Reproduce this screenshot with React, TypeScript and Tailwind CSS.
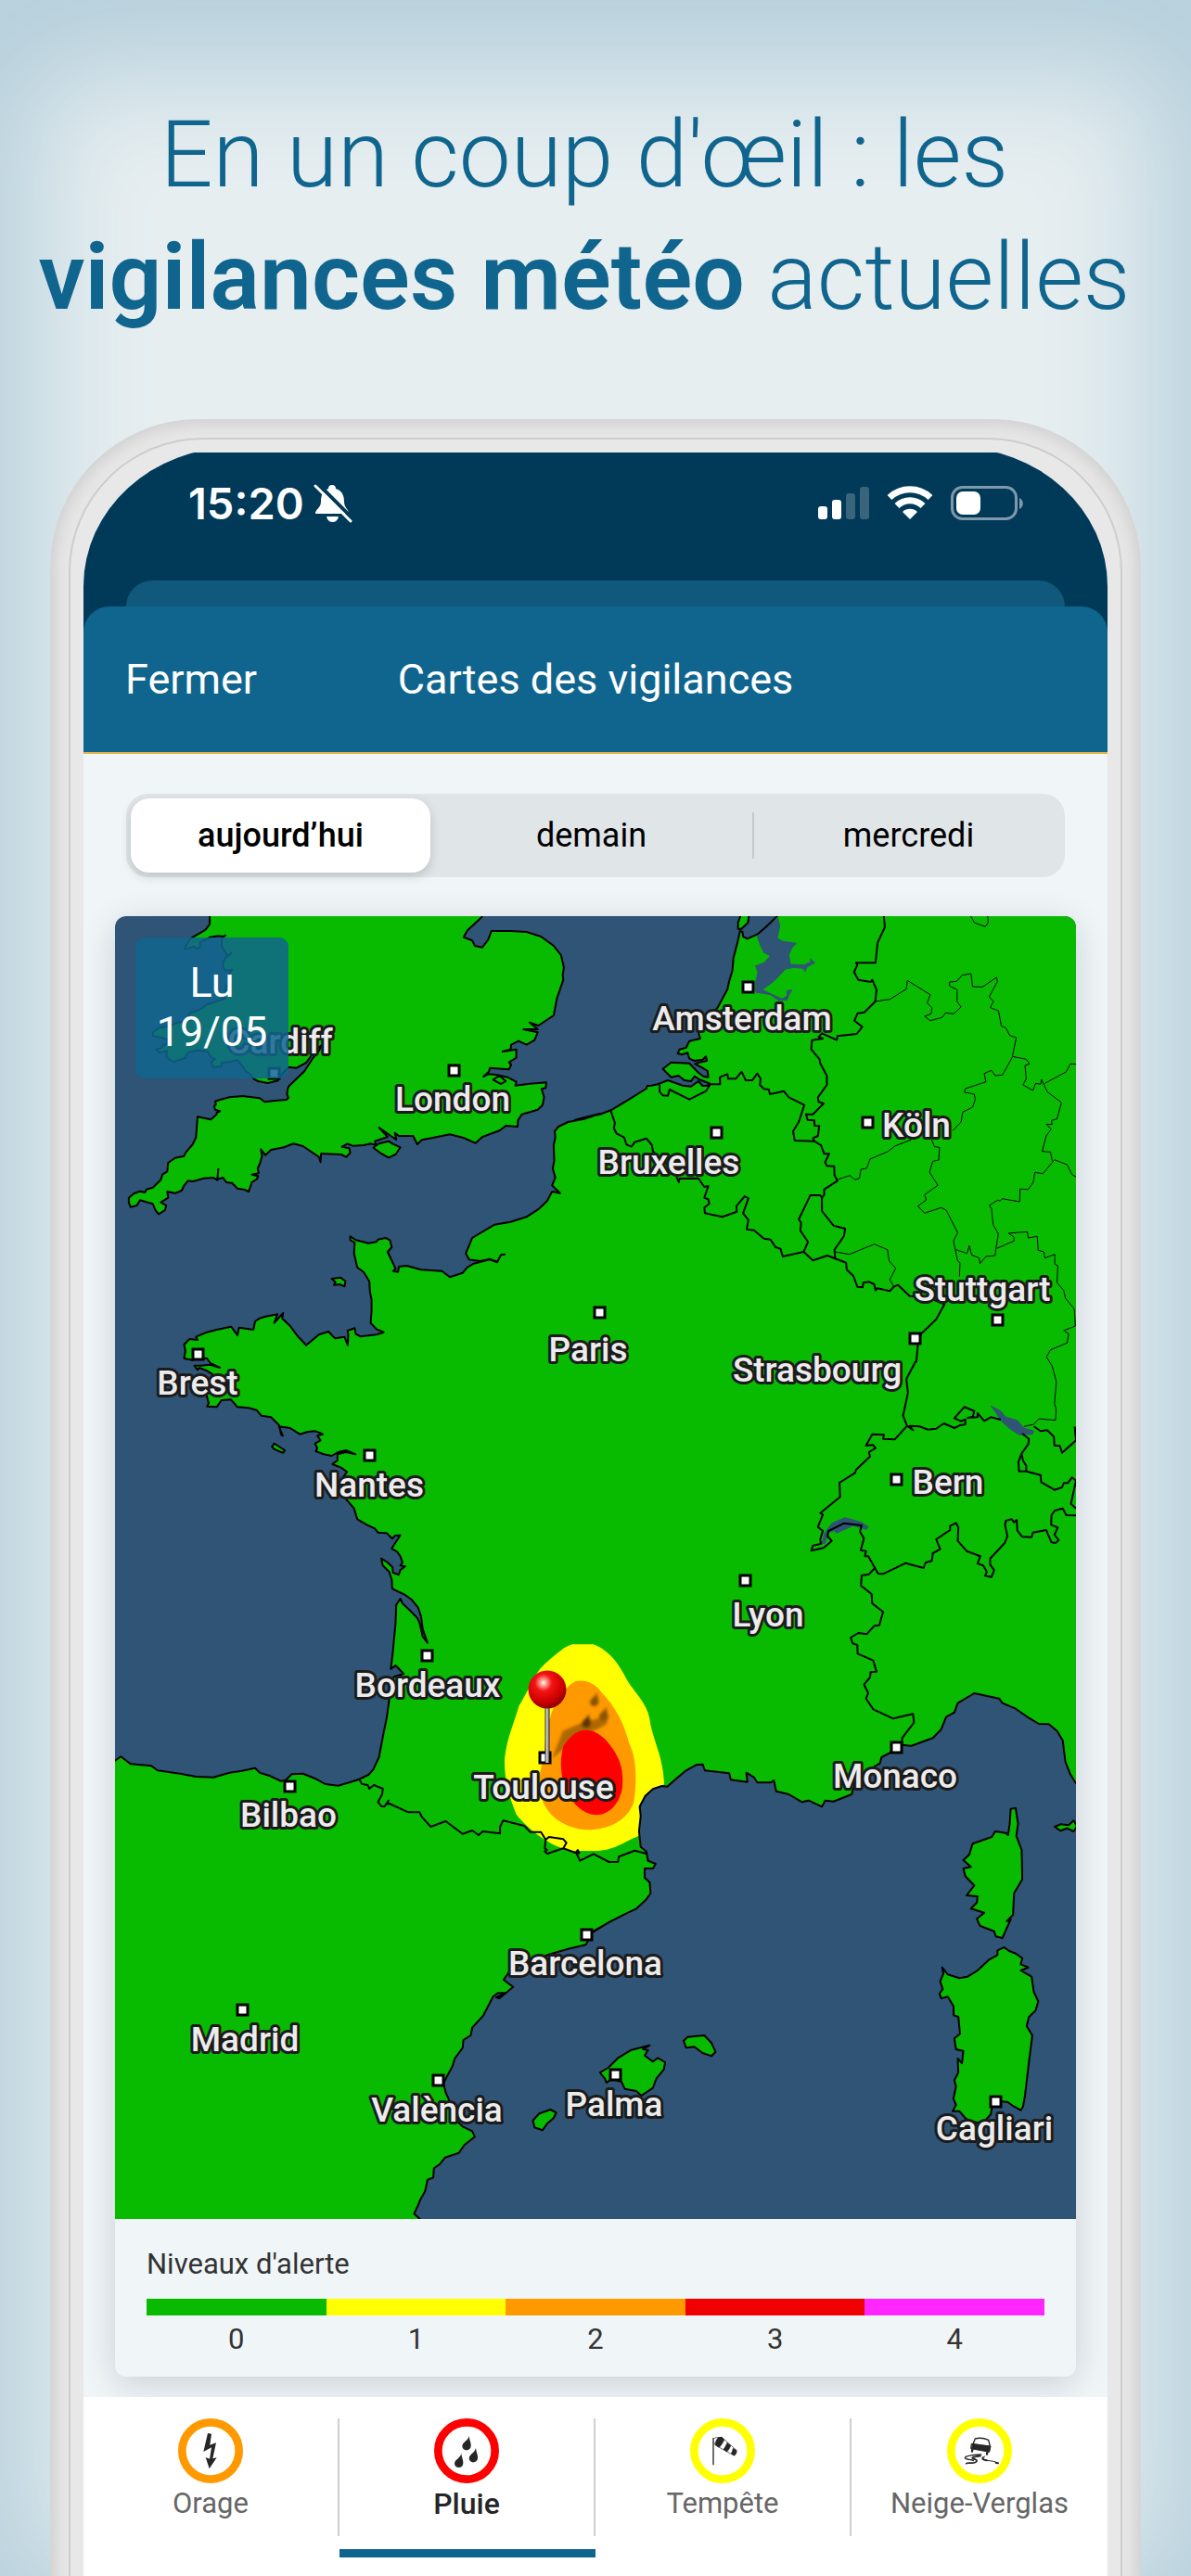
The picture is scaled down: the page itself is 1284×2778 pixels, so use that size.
import { useState } from "react";
import type { ReactNode } from "react";

type T_CITY = {
  name: string;
  // marker center
  mx: number;
  my: number;
  // label center and baseline
  x: number;
  y: number;
};

const CITIES: T_CITY[] = [
  { name: "Cardiff", mx: 171, my: 169, x: 178, y: 148 },
  { name: "London", mx: 365, my: 166, x: 364, y: 210 },
  { name: "Amsterdam", mx: 682, my: 76, x: 676, y: 123 },
  { name: "Bruxelles", mx: 648, my: 233, x: 597, y: 278 },
  { name: "Köln", mx: 811, my: 222, x: 864, y: 238 },
  { name: "Stuttgart", mx: 951, my: 435, x: 935, y: 415 },
  { name: "Strasbourg", mx: 862, my: 455, x: 757, y: 502 },
  { name: "Paris", mx: 522, my: 427, x: 510, y: 480 },
  { name: "Brest", mx: 89, my: 472, x: 89, y: 516 },
  { name: "Nantes", mx: 274, my: 581, x: 274, y: 626 },
  { name: "Bordeaux", mx: 336, my: 797, x: 337, y: 842 },
  { name: "Bern", mx: 842, my: 607, x: 898, y: 623 },
  { name: "Lyon", mx: 679, my: 716, x: 704, y: 766 },
  { name: "Toulouse", mx: 463, my: 907, x: 462, y: 952 },
  { name: "Monaco", mx: 842, my: 896, x: 841, y: 940 },
  { name: "Bilbao", mx: 188, my: 938, x: 187, y: 982 },
  { name: "Barcelona", mx: 508, my: 1098, x: 507, y: 1142 },
  { name: "Madrid", mx: 137, my: 1179, x: 140, y: 1224 },
  { name: "València", mx: 348, my: 1255, x: 347, y: 1300 },
  { name: "Palma", mx: 539, my: 1249, x: 538, y: 1294 },
  { name: "Cagliari", mx: 949, my: 1278, x: 948, y: 1320 },
];

// The outlines are stored in six sheets, each with its own origin and scale.
const sheet = (ox: number, oy: number, sx: number) => (points: string) =>
  points
    .trim()
    .split(/\s+/)
    .map((p) => {
      const [x, y] = p.split(",").map(Number);
      return `${(x / sx + ox).toFixed(1)},${(y / 3 + oy).toFixed(1)}`;
    })
    .join(" ");

const nw = sheet(-4, -8, 2.904);
const ne = sheet(496, -8, 2.8);
const w = sheet(-4, 472, 2.904);
const e = sheet(496, 472, 2.8);
const sw = sheet(-4, 892, 2.904);
const se = sheet(496, 892, 2.8);

const MAINLAND = [
  ne(`612,22 575,60 550,83 520,97 507,90 505,75 498,72 490,110 478,160 475,200 465,235 460,260 430,320 400,355 370,380
    372,400 378,420 345,428 335,450 315,455 310,468 322,472 340,466 345,485 360,492 385,488 395,478 398,492 375,497
    362,502 385,515 400,525 402,545 388,543 372,530 345,500 290,497 265,518 290,545 312,540 330,555 350,558 360,542
    375,552 405,565 400,572 385,573 372,558 350,575 325,572 280,555 250,568 230,572 218,573 215,582 150,625 108,652
    75,665 40,672 0,683`),
  nw(`1530,663 1480,680 1430,690 1400,705 1388,720 1390,740 1385,765 1387,815 1382,840 1390,870 1380,895 1405,920
    1380,915 1365,945 1340,970 1300,997 1250,1013 1200,1022 1130,1065 1120,1090 1110,1115 1120,1135 1155,1140 1185,1133
    1208,1142 1220,1120 1232,1118 1220,1120 1208,1144 1185,1135 1135,1148 1115,1160 1100,1178 1060,1192 1035,1172
    970,1168 925,1155 900,1158 898,1175 882,1172 890,1165 865,1110 878,1095 872,1072 858,1065 835,1070 830,1078
    805,1082 765,1072 748,1060 748,1072 762,1080 760,1115 770,1160 790,1175 808,1205 810,1240 815,1265 815,1300
    812,1340 830,1360 853,1370 830,1378 780,1384 765,1375 762,1357 740,1365 742,1380 740,1412 730,1385 702,1390
    695,1385 680,1368 650,1378 610,1412 590,1390 585,1385 560,1350 535,1325 538,1308 510,1340 520,1312 480,1320
    465,1325 450,1335 445,1362 400,1355 395,1380 375,1352 330,1362 300,1370 265,1385 270,1395 245,1392 228,1410
    232,1430 228,1455 255,1460 270,1452 300,1455 310,1470 340,1485 310,1475 280,1478 260,1478 270,1492`),
  w(`275,45 300,55 315,65 340,85 370,100 300,110 250,100 270,115 290,118 300,140 305,160 300,170 330,172 345,150
    375,148 395,172 430,175 455,182 470,200 500,205 525,230 532,262 537,265 525,235 560,240 590,260 615,252 640,250
    662,260 645,265 655,280 638,290 645,305 640,315 665,325 690,330 710,318 735,312 765,325 735,318 708,325 708,345
    692,357 720,368 738,382 725,400 715,440 735,470 760,500 770,535 800,553 825,565 835,578 862,580 880,598 888,588
    905,587 890,610 878,630 895,640 905,655 912,675 905,685 920,688 905,700 900,715 882,708 880,690 865,675 845,662
    850,685 870,705 878,730 880,760 920,780 940,795 960,820 970,850 975,890 990,935 975,915 965,870 958,855 935,830
    912,808 905,792 892,812 890,870 880,980 875,1020 890,1008 915,1035 885,1045 870,1070 870,1120 862,1180 850,1240
    838,1305 820,1345 805,1362 775,1377 745,1387 710,1397 670,1392 640,1375 600,1358 565,1360 545,1380 530,1382
    495,1365 465,1355 450,1340 405,1350 370,1355 320,1370 265,1368 215,1358 145,1348 125,1333 60,1327 30,1303 0,1325`),
  sw(`-20,70 -20,1580 975,1580 972,1545 948,1522 960,1495 968,1475 982,1450 990,1412 1008,1405 1010,1375 1028,1362
    1045,1340 1088,1325 1105,1300 1138,1273 1130,1255 1100,1240 1080,1220 1060,1160 1047,1130 1040,1100 1052,1075
    1068,1045 1075,1020 1100,985 1102,960 1125,945 1130,920 1165,880 1195,820 1210,808 1235,808 1215,825 1205,822
    1235,808 1258,788 1228,765 1245,740 1265,725 1330,700 1365,685 1430,665 1485,652 1495,635 1505,610 1568,573`),
  se(`55,610 100,580 155,550 185,535 215,505 228,485 225,450 210,435 210,405 235,405 243,390 220,380 215,350 198,335
    193,285 198,235 195,205 212,170 235,148 262,138 278,140 305,115 335,88 365,70 385,68 392,88 465,97 470,118
    520,125 517,95 540,110 550,127 590,127 600,120 607,155 645,165 685,190 705,185 745,205 755,185 780,188 835,165
    840,145 880,90 920,65 925,45 960,25`),
  e(`985,1265 1015,1268 1080,1243 1105,1215 1120,1175 1145,1160 1155,1130 1205,1098 1280,1115 1290,1130 1330,1148
    1370,1178 1400,1197 1430,1198 1455,1220 1472,1250 1480,1320 1495,1360 1512,1390 1560,1390`),
  ne("1560,-20 612,-20"),
].join(" ");

const BRITAIN = nw(`308,-20 308,50 295,68 272,82 255,92 248,97 232,122 230,130 245,127 258,122 270,130 277,124
  278,108 290,102 310,92 335,88 350,90 357,86 346,95 346,122 360,145 362,155 376,143 358,160 352,168 348,185 358,200
  378,198 365,215 368,230 360,250 355,290 335,298 300,310 270,330 250,335 240,345 245,360 205,370 180,380 150,385
  130,400 130,412 160,418 175,422 182,435 165,440 155,452 140,455 150,465 175,460 172,480 195,495 215,488 232,482
  240,465 265,458 300,460 310,478 325,487 312,497 320,512 345,510 345,498 370,495 395,490 408,505 420,525 435,535
  445,550 460,558 490,564 522,556 525,545 555,512 580,515 610,498 640,455 660,440 650,460 630,485 605,525 600,530
  575,555 555,575 552,585 550,600 555,612 548,618 505,622 480,625 465,613 440,610 410,606 370,610 340,618 325,623
  328,633 322,638 325,650 340,655 330,660 330,665 312,682 290,677 270,673 268,700 265,740 255,762 232,790 228,800
  200,806 178,822 175,850 160,860 155,877 130,902 110,908 105,918 90,914 70,922 55,935 55,950 60,965 80,960 90,943
  115,950 130,955 138,975 148,988 168,975 172,960 155,950 178,935 175,915 200,920 220,912 228,895 240,880 255,882
  290,872 320,870 332,878 335,842 332,875 350,870 360,885 378,887 395,905 415,908 430,915 440,885 455,875 460,865
  440,860 462,855 458,840 465,825 472,800 468,778 482,797 500,780 540,772 570,760 600,768 650,803 655,820 657,792
  720,795 735,803 748,790 745,775 722,770 740,760 755,767 790,765 812,760 830,765 825,752 865,738 838,708 892,747
  888,725 900,735 945,735 958,762 972,748 1010,740 1060,730 1100,740 1140,758 1162,738 1215,718 1235,702 1272,705
  1273,685 1285,665 1335,650 1350,635 1355,610 1347,583 1360,580 1362,562 1310,566 1265,572 1268,560 1240,545 1205,537
  1180,535 1165,543 1182,527 1185,515 1245,520 1252,505 1245,497 1268,482 1268,455 1225,462 1250,455 1252,440 1275,428
  1300,440 1325,425 1335,400 1290,390 1335,390 1310,368 1337,378 1385,345 1395,290 1415,230 1413,215 1417,190 1408,150
  1385,120 1345,90 1300,75 1250,72 1190,72 1180,100 1162,125 1138,120 1130,103 1103,92 1115,70 1160,27 1165,-20`);

const ISLANDS = [
  // Wight, Sheppey, Jersey, Belle-Île, Texel
  nw("820,773 838,760 868,752 880,760 905,772 890,795 868,805 845,792"),
  nw("1195,553 1215,540 1235,558 1220,567"),
  nw("690,1197 718,1193 733,1205 730,1222 715,1215 697,1217 702,1208"),
  w("503,300 510,290 520,297 543,312 538,320 525,315 510,308"),
  ne("500,20 492,45 492,65 502,65 522,45 525,20"),
  // Corse
  se(`1315,212 1330,210 1337,260 1332,300 1348,345 1350,440 1325,485 1322,555 1303,575 1315,570 1300,605 1290,630
    1270,625 1265,608 1222,590 1213,568 1235,548 1195,535 1213,515 1215,495 1182,492 1205,460 1178,430 1172,405
    1195,400 1172,378 1190,360 1200,325 1258,303 1268,285 1300,290 1307,297 1312,260`),
  // Sardaigne
  se(`1275,670 1295,660 1310,672 1330,680 1350,695 1345,715 1368,725 1345,735 1378,755 1385,805 1398,835 1390,865
    1370,885 1363,915 1380,945 1370,1030 1358,1140 1352,1175 1345,1187 1325,1175 1305,1160 1275,1158 1258,1180
    1255,1200 1240,1218 1215,1228 1180,1215 1160,1190 1140,1190 1150,1170 1142,1150 1150,1110 1145,1090 1157,1065
    1155,1020 1168,1035 1172,995 1150,990 1145,955 1162,940 1157,885 1143,880 1142,850 1125,820 1105,825 1100,810
    1110,795 1102,770 1112,745 1108,725 1125,748 1160,760 1185,755 1215,735 1250,700 1275,685`),
  // Elbe, Mallorca, Menorca, Ibiza
  se("1448,270 1465,262 1490,265 1505,250 1515,268 1505,285 1485,275 1465,283"),
  se(`75,1065 100,1050 130,1018 170,992 225,977 205,990 220,992 210,1010 235,1030 250,1018 272,1032 268,1055 245,1085
    235,1115 200,1140 185,1125 150,1118 140,1095 110,1085 95,1098 90,1085`),
  se("328,962 340,950 390,945 412,970 424,998 412,1012 385,1002 360,982 335,985"),
  sw("1320,1220 1340,1198 1375,1185 1393,1195 1385,1212 1365,1230 1350,1252 1325,1243"),
];

const LAKES = [
  // IJsselmeer
  ne(`550,90 575,62 612,30 618,55 610,95 625,105 668,112 655,125 645,150 650,180 690,182 712,172 710,162 724,175
    700,188 695,203 688,193 660,190 635,195 600,235 565,262 600,280 625,292 640,282 640,265 655,263 645,280 640,295
    615,297 590,278 545,270 545,240 552,205 545,185 570,175 590,152 570,142 560,120`),
  // Bodensee
  e(`1255,168 1285,185 1300,205 1335,215 1355,240 1385,250 1380,260 1340,262 1310,240 1285,215 1270,190`),
  // Léman
  e(`745,615 753,580 775,548 815,530 865,545 885,560 880,568 840,556 820,565 790,580 782,572 765,578 755,612`),
];

const BORDERS = [
  ne(`932,-20 932,25 935,60 913,110 907,175 848,175 852,182 842,205 855,230 892,237 897,230 910,262 906,300 873,335
    853,338 843,362 867,382 850,405 792,412 790,425 745,403 735,415 748,420 715,425 713,455 738,487 740,500 760,540
    760,570 733,610 735,625 750,630 718,665 697,665 702,683 722,685 723,702 737,703 733,735 718,742 722,752`),
  ne(`405,568 438,568 437,545 460,535 462,550 485,550 503,527 515,555 535,555 550,533 560,550 558,570 570,583 585,585
    588,600 630,590 645,610 692,635 675,690 658,720 663,750 722,752`),
  ne("255,570 255,592 265,604 280,605 285,585 345,617 395,590 408,568"),
  ne(`722,752 742,765 752,793 767,793 755,820 760,832 782,833 783,862 792,880 752,908 752,925 745,935 740,927 710,927
    700,950 675,1005 682,1015 680,1042 703,1078 690,1110 718,1138 762,1122 785,1132 783,1103 812,1058 815,1035 780,1025
    745,978 745,935`),
  ne(`108,655 120,693 117,710 125,727 148,740 155,763 170,770 180,755 215,743 232,765 235,785 300,850 313,885 315,873
    372,872 390,900 402,897 390,935 402,940 405,955 390,967 392,985 445,997 488,980 487,962 512,930 523,937 507,985
    523,1007 518,1037 540,1040 570,1067 590,1070 605,1095 620,1100 627,1125 690,1110`),
  ne(`785,1132 818,1145 820,1168 840,1188 852,1223 868,1225 870,1210 888,1207 903,1215 907,1235 912,1228 950,1237
    962,1223 975,1217 1010,1253 1060,1255 1115,1280 1090,1328 1045,1375 1035,1410 1030,1465`) +
    " " +
    e("1028,25 1000,82 1005,125 990,200 1002,233"),
  // Suisse
  e(`1002,233 1020,247 1010,233 1040,235 1065,245 1090,242 1113,225 1145,240 1160,232 1178,228 1178,212 1165,218
    1145,208 1175,172 1205,185 1200,205 1185,207 1215,205 1215,192 1235,217 1255,205 1285,213`),
  e("1385,235 1405,250 1425,247 1445,268 1447,297 1463,297 1470,320 1512,280 1508,235"),
  e("1350,258 1370,275 1368,292 1348,322 1338,350 1340,380 1362,380 1362,362 1352,345 1348,325"),
  e("1362,380 1405,392 1407,415 1447,440 1470,432 1475,418 1487,418 1500,400 1512,410 1497,485 1512,500"),
  e(`1512,523 1483,522 1472,500 1448,507 1438,522 1437,553 1457,562 1447,585 1460,603 1450,612 1438,610 1422,570
    1382,578 1378,593 1350,592 1335,572 1333,537 1325,545 1318,535 1300,540 1298,555 1305,590 1297,612 1253,662
    1253,682 1265,700 1257,722 1238,718 1243,705 1232,685 1215,678 1223,655 1182,638 1155,605 1157,562 1150,547
    1132,557 1132,570 1090,600 1102,632 1080,645 1077,670 1058,675 1052,693 998,677 930,712 915,712 885,655 875,655
    878,638 862,635 872,597 860,575 865,555 812,548 765,573 762,590 775,605 750,628 713,637 718,620 742,615 740,600
    748,573 733,560 748,520 740,515 800,463 798,417 845,385 848,375 890,332 887,318 907,305 900,295 878,297 897,260
    932,262 930,275 965,277 1002,233`),
  e(`903,695 887,713 865,717 863,750 895,777 897,808 930,835 918,878 903,880 880,907 855,903 832,918 838,937 852,942
    853,970 900,992 910,1028 892,1030 890,1047 872,1070 885,1097 878,1115 900,1150 960,1180 1020,1165 1023,1193
    987,1243 988,1265`),
  // Pyrénées
  sw(`775,115 785,132 803,135 808,147 822,135 850,147 848,165 835,190 845,203 855,205 868,185 860,198 870,195 930,223
    965,223 972,238 1000,270 1047,252 1100,293 1130,282 1150,297 1163,285 1217,292 1217,270 1227,250 1293,267 1312,287
    1345,287 1360,312 1357,340 1365,345 1357,350 1365,357 1415,340 1425,322 1415,310 1370,303 1360,312`),
  sw("1415,340 1455,355 1460,345 1465,355 1457,357 1467,380 1510,358 1558,384") +
    " " +
    se("130,383 132,367 180,347 215,357"),
];

const STATES = [
  ne(`906,300 950,293 1000,260 1003,232 1072,278 1063,305 1077,320 1075,340 1055,348 1072,362 1108,352 1118,337
    1143,340 1165,318 1153,300 1153,262 1130,250 1130,237 1152,235 1168,215 1195,210 1200,252 1230,253 1272,222
    1275,235 1250,285 1263,300 1253,320 1278,330 1287,380 1300,385 1312,410 1332,417 1320,478 1362,487 1372,502
    1358,507 1362,550 1352,570 1382,588 1390,565 1405,568 1408,553 1425,592 1468,627 1455,680 1438,685 1440,698
    1422,697 1437,713 1422,735 1410,785 1435,787 1440,815`),
  ne(`1320,480 1290,538 1268,540 1257,523 1235,533 1240,560 1178,582 1175,593 1205,600 1208,617 1200,642 1170,658
    1165,690 1140,718`),
  ne("1418,565 1482,528 1495,502 1512,503"),
  ne(`1512,867 1500,860 1485,828 1447,812 1412,857 1388,853 1383,885 1368,908 1343,907 1342,948 1290,938 1283,945
    1275,943 1250,960 1257,970 1262,1022 1278,1052 1270,1100 1268,1122 1240,1125 1222,1148 1220,1130 1197,1120
    1190,1090 1183,1115 1150,1103`),
  ne("795,875 830,863 845,877 858,872 863,843 880,840 890,810 945,785 965,768 1015,747"),
  ne(`1075,745 1085,770 1100,772 1098,813 1080,817 1070,852 1095,895 1055,925 1060,942 1035,962 1055,985 1105,967
    1120,975 1155,1048 1142,1075 1155,1140 1162,1145 1160,1190`),
  ne("785,1110 828,1118 903,1085 943,1103 948,1140 968,1163 950,1200 962,1223"),
  ne(`1270,1100 1325,1075 1325,1062 1308,1050 1365,1045 1368,1065 1395,1060 1398,1105 1415,1110 1418,1130 1448,1118
    1448,1150 1457,1155 1455,1210 1475,1235 1480,1260 1507,1295 1510,1350 1475,1365 1490,1375 1485,1405 1435,1427
    1423,1450`) +
    " " +
    e("1423,10 1440,40 1453,90 1447,160 1452,180 1450,215 1400,210 1385,228 1355,235"),
  ne("1190,15 1205,45 1238,58 1247,45 1245,15"),
];

const LEVELS = [
  { level: 0, color: "bg-[#08bb00]" },
  { level: 1, color: "bg-[#ffff00]" },
  { level: 2, color: "bg-[#ff9900]" },
  { level: 3, color: "bg-[#f00000]" },
  { level: 4, color: "bg-[#ff26ff]" },
];

const DAYS = ["aujourd’hui", "demain", "mercredi"];

const drop = (x: number, y: number) =>
  `M${x + 8} ${y - 31} C${x + 10} ${y - 14} ${x + 15} ${y - 10} ${x + 14} ${y + 2} C${x + 12} ${y + 20} ${x - 13} ${y + 19} ${x - 14} ${y + 2} C${x - 13} ${y - 12} ${x + 4} ${y - 14} ${x + 8} ${y - 31}Z`;

const AlertRing = ({ color, children }: { color: string; children: ReactNode }) => (
  <svg viewBox="0 0 210 210" className="size-[70px]" aria-hidden="true">
    <circle cx="105" cy="105" r="92" fill="#fff" stroke={color} strokeWidth="26" />
    {children}
  </svg>
);

const TABS = [
  {
    label: "Orage",
    color: "#ff9900",
    icon: (
      <path
        d="M96 48 L108 50 L103 86 L123 79 L112 130 L125 127 L101 163 L89 126 L102 131 L108 94 L82 108 Z"
        fill="#262626"
      />
    ),
  },
  {
    label: "Pluie",
    color: "#ff0000",
    icon: (
      <g fill="#262626">
        <path d={drop(105, 88)} />
        <path d={drop(127, 127)} />
        <path d={drop(80, 144)} />
      </g>
    ),
  },
  {
    label: "Tempête",
    color: "#ffff00",
    icon: (
      <g stroke="#262626" strokeWidth="2" strokeLinejoin="round" fill="none">
        <path d="M75 63 V151" strokeWidth="4" />
        <path d="M76 65 L86 62 L102 61 L150 103 C151 110 147 120 142 120 L82 87 L76 76" />
        <path d="M91 62 L103 61 L110 69 C107 77 101 87 94 94 L83 87 C80 79 84 70 91 62Z" fill="#262626" />
        <path d="M120 79 L131 88 C129 95 125 102 119 108 L108 101 C112 95 117 87 120 79Z" fill="#262626" />
        <path d="M139 97 L150 104 C150 111 147 117 142 120 L133 114 C136 109 138 103 139 97Z" fill="#262626" />
      </g>
    ),
  },
  {
    label: "Neige-Verglas",
    color: "#ffff00",
    icon: (
      <g stroke="#262626" fill="none" strokeLinecap="round" strokeLinejoin="round">
        <path d="M84 83 L91 66 C105 62 120 64 134 70 L139 90" strokeWidth="4" />
        <path d="M80 82 C100 84 120 88 141 90 L137 109 L78 98 Z" fill="#262626" strokeWidth="3" />
        <path d="M82 99 L81 107 M130 110 L129 116" strokeWidth="7" />
        <path d="M110 117 C85 118 60 121 58 128 C59 134 76 132 85 137" strokeWidth="4" />
        <path d="M108 122 C90 124 76 127 84 131 C101 134 99 141 86 144 C77 146 68 142 62 146" strokeWidth="5" />
        <path d="M122 123 C110 128 114 132 128 136 C142 138 156 138 165 145" strokeWidth="3" />
        <path d="M116 127 C113 133 121 135 128 136 M158 144 L165 145" strokeWidth="6" />
      </g>
    ),
  },
];

const StatusIcons = () => (
  <svg viewBox="0 0 222 40" className="h-[40px] w-[222px]" aria-hidden="true">
    <g fill="#fff">
      <rect x="0" y="23" width="10" height="14" rx="3" />
      <rect x="15" y="16" width="10" height="21" rx="3" />
      <rect x="30" y="9" width="10" height="28" rx="3" opacity="0.22" />
      <rect x="45" y="2" width="10" height="35" rx="3" opacity="0.22" />
    </g>
    <g fill="none" stroke="#fff" strokeWidth="7">
      <path d="M77 13.500 A32 32 0 0 1 121 13.500" />
      <path d="M85 22.500 A20 20 0 0 1 113 22.500" />
    </g>
    <path d="M99 37 L91 29 A11.500 11.500 0 0 1 107 29 Z" fill="#fff" />
    <rect x="144.500" y="2.500" width="69" height="34" rx="11" fill="none" stroke="#7f98ab" strokeWidth="3" />
    <path d="M217 14 C222 16 222 24 217 26 Z" fill="#7f98ab" />
    <rect x="149" y="7" width="26" height="25" rx="7" fill="#fff" />
  </svg>
);

const BellOff = () => (
  <svg viewBox="0 0 42 42" className="size-[42px]" aria-hidden="true">
    <path
      d="M20 1 C23 1 24 3 24 5 C31 7 33 13 33 19 C33 26 38 27 38 32 L2 32 C2 27 8 26 8 19 C8 12 10 7 16 5 C16 3 17 1 20 1Z"
      fill="#fff"
    />
    <path d="M14 35 H27 C26 39 24 41 20.500 41 C17 41 15 39 14 35Z" fill="#fff" />
    <path d="M5 0 L42 37" stroke="#003a58" strokeWidth="4" />
    <path d="M2 2 L40 40" stroke="#fff" strokeWidth="3" strokeLinecap="round" />
  </svg>
);

const AlertMap = () => (
  <svg viewBox="0 0 1036 1405" className="block w-full" role="img" aria-label="Carte des vigilances">
    <defs>
      <clipPath id="land">
        <polygon points={MAINLAND} />
      </clipPath>
      <radialGradient id="pin" cx="0.4" cy="0.32" r="0.7">
        <stop offset="0" stopColor="#fff" />
        <stop offset="0.12" stopColor="#ff9a8f" />
        <stop offset="0.32" stopColor="#f31414" />
        <stop offset="0.7" stopColor="#d20000" />
        <stop offset="1" stopColor="#8a0000" />
      </radialGradient>
      <linearGradient id="needle">
        <stop offset="0" stopColor="#333" />
        <stop offset="0.45" stopColor="#ddd" />
        <stop offset="1" stopColor="#222" />
      </linearGradient>
      <filter id="soft" x="-50%" y="-50%" width="200%" height="200%">
        <feGaussianBlur stdDeviation="5" />
      </filter>
    </defs>

    <rect width="1036" height="1405" fill="#305475" />
    <polygon points={MAINLAND} fill="#08bb00" />
    <g fill="#08bb00" stroke="#000" strokeWidth="2" strokeLinejoin="round">
      <polygon points={BRITAIN} />
      {ISLANDS.map((points) => (
        <polygon key={points} points={points} />
      ))}
    </g>

    {/* Alert area around Toulouse */}
    <g clipPath="url(#land)">
      <g transform="translate(396 762) scale(0.3333)">
        <path
          d="M290 70 L360 70 C410 90 440 130 465 180 C490 225 530 255 541 310 C550 380 585 430 588 520 L520 685 C470 700 430 738 370 738 L290 738 C220 725 150 670 110 620 C85 560 70 500 72 440 C80 370 105 320 118 270 C150 220 170 160 200 135 C235 105 260 80 290 70Z"
          fill="#ffff00"
        />
        <path
          d="M300 190 C330 182 365 195 385 225 C430 270 460 330 475 390 C500 440 500 520 490 580 C470 640 410 670 340 670 C260 665 205 620 190 560 C180 520 185 480 200 430 C205 350 220 240 300 190Z"
          fill="#ff9900"
        />
        <g fill="#8a5500" filter="url(#soft)">
          <path d="M225 440 L260 350 L320 325 L410 300 L400 330 L290 385Z" opacity="0.7" />
          <path d={drop(362, 255)} />
          <path d={drop(392, 302)} />
          <path d={drop(336, 325)} fill="#5c3900" />
        </g>
        <path
          d="M335 347 C370 347 400 375 420 405 C445 440 460 480 452 540 C440 590 410 620 370 622 C320 620 285 580 262 520 C252 470 252 440 262 400 C280 370 305 347 335 347Z"
          fill="#ff0000"
        />
      </g>
    </g>

    <g fill="#305475" stroke="#305475" strokeWidth="1">
      {LAKES.map((points) => (
        <polygon key={points} points={points} />
      ))}
    </g>
    <g fill="none" stroke="#000" strokeWidth="2" strokeLinejoin="round">
      <polygon points={MAINLAND} />
      {BORDERS.map((points) => (
        <polyline key={points} points={points} />
      ))}
    </g>
    <g fill="none" stroke="#000" strokeWidth="1">
      {STATES.map((points) => (
        <polyline key={points} points={points} />
      ))}
    </g>

    {CITIES.map(({ name, mx, my }) => (
      <rect key={name} x={mx - 5} y={my - 5} width="11" height="11" fill="#fff" stroke="#000" strokeWidth="3" />
    ))}

    {/* Pin */}
    <rect x="463.500" y="853" width="5" height="60" fill="url(#needle)" />
    <circle cx="466" cy="834" r="20.500" fill="url(#pin)" />

    <g
      className="font-[Roboto,sans-serif] text-[37px] font-medium"
      fill="#ececec"
      stroke="#1b1b1b"
      strokeWidth="6"
      strokeLinejoin="round"
      paintOrder="stroke"
      textAnchor="middle"
    >
      {CITIES.map(({ name, x, y }) => (
        <text key={name} x={x} y={y}>
          {name}
        </text>
      ))}
    </g>
  </svg>
);

export default function App() {
  const [day, setDay] = useState(0);
  const [tab, setTab] = useState(1);

  return (
    <main className="h-screen overflow-hidden bg-[#e6eef0] pt-[101px] font-[Roboto,sans-serif] shadow-[inset_0_40px_120px_40px_#b7d0dc]">
      <h1 className="pr-6 text-center text-[100px] leading-[132px] font-light text-[#10658e]">
        En un coup d'œil : les
        <br />
        <strong className="font-semibold">vigilances météo</strong> actuelles
      </h1>

      {/* Phone frame */}
      <div className="mx-[54px] mt-[87px] rounded-[160px] bg-[#e7e7e7] p-5 pb-[140px] shadow-[inset_0_0_18px_4px_#cccccc]">
        <div className="rounded-t-[145px] border-2 border-b-0 border-[#cdcdcd] bg-[#e8e8e8] px-3.5 pt-2">
          <div className="overflow-hidden bg-[#e8e8e8] pt-1.5 [border-radius:165px_165px_0_0/150px_150px_0_0]">
            <div className="bg-[#003a58]">
              {/* Status bar */}
              <div className="flex h-[138px] items-start justify-between pt-7 pr-[90px] pl-[113px]">
                <div className="flex h-[53px] items-center gap-2.5">
                  <span className="font-[Inter,sans-serif] text-[47px] leading-[53px] font-semibold text-white">15:20</span>
                  <BellOff />
                </div>
                <div className="flex h-[53px] items-center">
                  <StatusIcons />
                </div>
              </div>

              <div className="mx-[46px] h-7 rounded-t-[28px] bg-[#10597c]" />
              <header className="grid h-[159px] grid-cols-[1fr_auto_1fr] items-center rounded-t-[28px] border-b-2 border-[#e2af45] bg-[#10658e] px-[45px] text-[45px] leading-[56px] text-white">
                <button type="button" className="justify-self-start">
                  Fermer
                </button>
                <h2>Cartes des vigilances</h2>
              </header>
            </div>

            <div className="bg-[#f0f5f8] pt-[43px] pb-[22px]">
              {/* Day switch */}
              <div className="mx-[46px] grid h-[90px] grid-cols-[323px_1fr_1fr] gap-x-[5px] rounded-[24px] bg-[#e0e5e8] py-[5px] pl-[5px]">
                {DAYS.map((label, i) => (
                  <button
                    key={label}
                    type="button"
                    onClick={() => setDay(i)}
                    className={
                      i === day
                        ? "rounded-[20px] bg-white text-[36px] leading-[44px] font-medium text-black shadow-[0_4px_12px_rgba(0,0,0,0.16)]"
                        : "relative text-[36px] leading-[44px] text-black"
                    }
                  >
                    {label}
                    {i === 2 && <span className="absolute top-[15px] left-0 h-[50px] w-0.5 bg-[#c5cacd]" />}
                  </button>
                ))}
              </div>

              {/* Map card */}
              <section className="mx-[34px] mt-[42px] rounded-xl bg-[#f0f5f8] shadow-[0_8px_36px_rgba(0,20,40,0.16)]">
                <div className="relative overflow-hidden rounded-t-xl">
                  <AlertMap />
                  <div className="absolute top-[23px] left-[22px] w-[165px] rounded-[10px] bg-[#10658e]/85 pt-[22px] pb-6 text-center text-[45px] leading-[53px] text-white">
                    Lu
                    <br />
                    19/05
                  </div>
                </div>

                <div className="px-[34px] pt-[29px] pb-5 text-[31px] leading-[40px] text-[#333333]">
                  <h3>Niveaux d'alerte</h3>
                  <div className="mt-[17px] grid grid-cols-5 text-center">
                    {LEVELS.map(({ level, color }) => (
                      <div key={level}>
                        <div className={`mb-1.5 h-[18px] ${color}`} />
                        {level}
                      </div>
                    ))}
                  </div>
                </div>
              </section>
            </div>

            {/* Alert types */}
            <nav className="relative grid grid-cols-4 bg-white pt-[23px]">
              {TABS.map(({ label, color, icon }, i) => (
                <button key={label} type="button" onClick={() => setTab(i)}>
                  <span
                    className={`mb-3.5 flex h-[127px] flex-col items-center gap-0.5 ${i < 3 ? "border-r-2 border-[#d0d0d0]" : ""}`}
                  >
                    <AlertRing color={color}>{icon}</AlertRing>
                    <span
                      className={
                        i === tab
                          ? "text-[32px] leading-[40px] font-medium text-[#262626]"
                          : "text-[31px] leading-[40px] text-[#666666]"
                      }
                    >
                      {label}
                    </span>
                  </span>
                  <span className={`block h-[9px] ${i === tab ? "bg-[#10658e]" : ""}`} />
                </button>
              ))}
            </nav>
            <div className="h-[100px] bg-white" />
          </div>
        </div>
      </div>
    </main>
  );
}
